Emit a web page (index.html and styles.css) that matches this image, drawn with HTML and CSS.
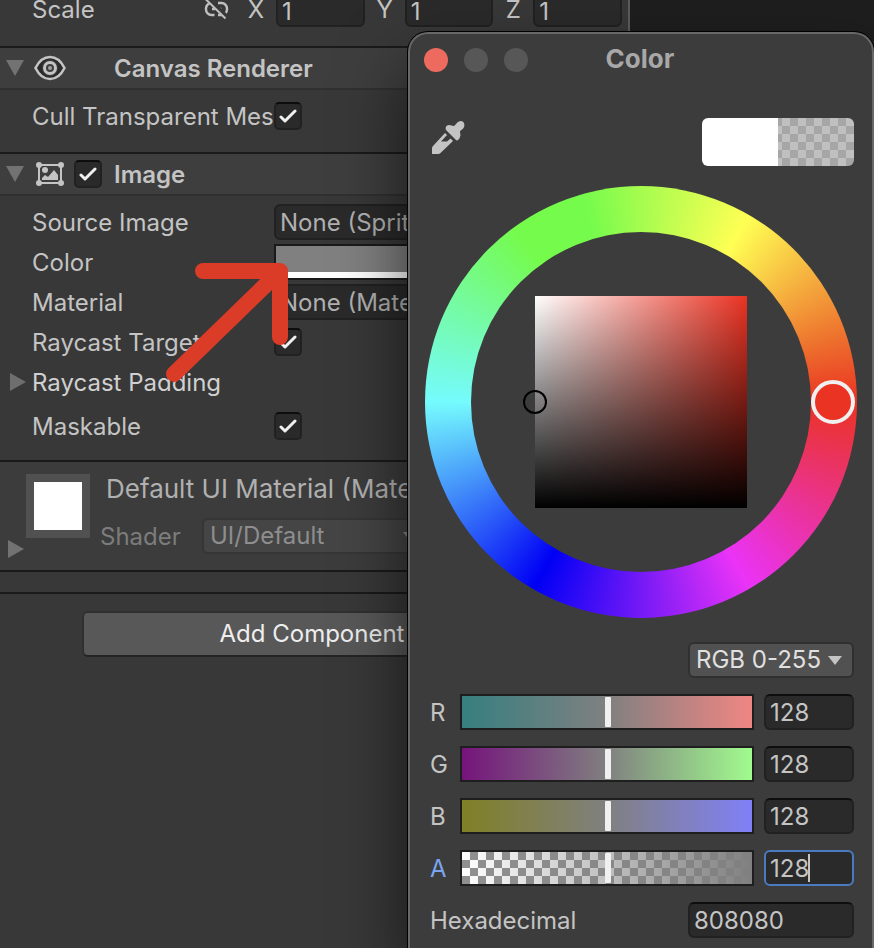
FILE: index.html
```html
<!DOCTYPE html>
<html lang="en">
<head>
<meta charset="utf-8">
<title>Inspector</title>
<link rel="stylesheet" href="styles.css">
</head>
<body>
<main class="editor">
  <section class="inspector" aria-label="Inspector">
    <div class="scale-row">
      <span class="scale-label">Scale</span>
      <svg class="link-icon" width="26" height="22" viewBox="0 0 26 22" fill="none" stroke="#c0c0c0" stroke-width="2.400">
        <path d="M10.500 5H7.500a5.500 5.500 0 0 0-5.500 5.500v1A5.500 5.500 0 0 0 7.500 17h3M14 5h3.500a5.500 5.500 0 0 1 5.500 5.500v1a5.500 5.500 0 0 1-5.500 5.500H14"/>
        <path d="M8 11h3M14 11h3.500"/>
        <path d="M3 0L23 19.500" stroke="#383838" stroke-width="5"/>
        <path d="M1.500 1L21.500 20.500" stroke-width="2"/>
      </svg>
      <label for="sx">X</label><input class="field" id="sx" value="1">
      <label for="sy">Y</label><input class="field" id="sy" value="1">
      <label for="sz">Z</label><input class="field" id="sz" value="1">
    </div>

    <header class="component-head">
      <svg class="fold" width="18" height="16" viewBox="0 0 18 16"><path d="M0 0h18L9 16z" fill="#727272"/></svg>
      <svg class="head-icon" width="32" height="26" viewBox="0 0 32 26" fill="none" stroke="#c4c4c4" stroke-width="3">
        <path d="M1.500 13C5 6 10 2 16 2s11 4 14.500 11C27 20 22 24 16 24S5 20 1.500 13z" fill="#2b2b2b" stroke-width="2.600"/>
        <circle cx="16" cy="13" r="8" fill="#3e3e3e" stroke="none"/>
        <circle cx="16" cy="13" r="5.500"/>
        <circle cx="16" cy="13" r="2" fill="#a0a0a0" stroke="none"/>
      </svg>
      <h2>Canvas Renderer</h2>
    </header>
    <div class="component-body single">
      <div class="prop">
        <label for="cull">Cull Transparent Mesh</label>
        <span class="check"><input type="checkbox" id="cull" checked><svg width="18" height="14" viewBox="0 0 18 14"><path d="M2 8l4 4L16 2"/></svg></span>
      </div>
    </div>

    <header class="component-head">
      <svg class="fold" width="18" height="16" viewBox="0 0 18 16"><path d="M0 0h18L9 16z" fill="#727272"/></svg>
      <svg class="head-icon" width="32" height="26" viewBox="0 0 32 26" fill="#c4c4c4">
        <path d="M5 4h22v18H5z" fill="none" stroke="#c4c4c4" stroke-width="2"/>
        <circle cx="5" cy="4" r="3"/><circle cx="27" cy="4" r="3"/><circle cx="5" cy="22" r="3"/><circle cx="27" cy="22" r="3"/>
        <circle cx="11" cy="9" r="3"/>
        <path d="M8 19v-2l3-3 3 2 6-7 4 5v5z"/>
      </svg>
      <span class="check"><input type="checkbox" aria-label="Image enabled" checked><svg width="18" height="14" viewBox="0 0 18 14"><path d="M2 8l4 4L16 2"/></svg></span>
      <h2>Image</h2>
    </header>
    <div class="component-body">
      <div class="prop"><label for="src">Source Image</label><input class="field object" id="src" value="None (Sprite)"></div>
      <div class="prop"><label for="tint">Color</label><button class="tint" id="tint" aria-label="Color"></button></div>
      <div class="prop"><label for="mat">Material</label><input class="field object" id="mat" value="None (Material)"></div>
      <div class="prop">
        <label for="ray">Raycast Target</label>
        <span class="check"><input type="checkbox" id="ray" checked><svg width="18" height="14" viewBox="0 0 18 14"><path d="M2 8l4 4L16 2"/></svg></span>
      </div>
      <div class="prop foldout">
        <svg width="16" height="18" viewBox="0 0 16 18"><path d="M0 0v18l16-9z" fill="#6e6e6e"/></svg>
        <span>Raycast Padding</span>
      </div>
      <div class="prop last">
        <label for="mask">Maskable</label>
        <span class="check"><input type="checkbox" id="mask" checked><svg width="18" height="14" viewBox="0 0 18 14"><path d="M2 8l4 4L16 2"/></svg></span>
      </div>
    </div>

    <section class="material">
      <svg class="material-fold" width="16" height="18" viewBox="0 0 16 18"><path d="M0 0v18l16-9z" fill="#727272"/></svg>
      <div class="thumb"></div>
      <div class="material-info">
        <div class="material-name">Default UI Material (Material)</div>
        <div class="shader">
          <label for="shader">Shader</label>
          <div class="select-box">
            <select id="shader" disabled><option>UI/Default</option></select>
            <svg width="14" height="9" viewBox="0 0 14 9"><path d="M0 0h14L7 9z" fill="#858585"/></svg>
          </div>
        </div>
      </div>
    </section>
    <div class="divider"></div>
    <div class="add-row"><button class="add">Add Component</button></div>
  </section>
</main>

<svg class="arrow" width="104" height="130" viewBox="0 0 104 130" fill="none" stroke="#da3c28" stroke-width="16" stroke-linecap="round" stroke-linejoin="round">
  <path d="M37 15H114V81M8 118L114 15"/>
</svg>

<section class="picker" aria-label="Color picker">
  <header class="titlebar">
    <div class="lights">
      <button class="light close" aria-label="Close"></button>
      <button class="light" aria-label="Minimize" disabled></button>
      <button class="light" aria-label="Zoom" disabled></button>
    </div>
    <h1>Color</h1>
  </header>
  <div class="toolbar">
    <button class="dropper" aria-label="Pick color">
      <svg width="34" height="34" viewBox="0 0 34 34" fill="#c4c4c4">
        <path d="M15 9c-1-2 0-5 3-5 2 0 3 1 5 1 2-1 3-5 7-5 3 0 4 4 3 6-1 3-4 3-4 5 0 1 1 3 0 5-1 3-3 4-4 3z"/>
        <path fill-rule="evenodd" d="M14 12l8 8L9.500 32c-1 1-2 1-4 1H1v-5c0-1 0-2 1-3zM16 14l-6 6.500h6l3.500-3z"/>
      </svg>
    </button>
    <div class="swatches"><span class="old"></span><span class="new"></span></div>
  </div>
  <div class="wheel">
    <div class="hole"><div class="sv"><span class="sv-cursor"></span></div></div>
    <span class="hue-cursor"></span>
  </div>
  <div class="mode">
    <div class="select-box mode-box">
      <select aria-label="Mode"><option>RGB 0-255</option></select>
      <svg width="14" height="9" viewBox="0 0 14 9"><path d="M0 0h14L7 9z" fill="#c4c4c4"/></svg>
    </div>
  </div>
  <div class="channels">
    <div class="channel"><label for="r">R</label><input class="slider red" type="range" min="0" max="255" value="128" aria-label="Red"><input class="field" id="r" value="128"></div>
    <div class="channel"><label for="g">G</label><input class="slider green" type="range" min="0" max="255" value="128" aria-label="Green"><input class="field" id="g" value="128"></div>
    <div class="channel"><label for="b">B</label><input class="slider blue" type="range" min="0" max="255" value="128" aria-label="Blue"><input class="field" id="b" value="128"></div>
    <div class="channel active"><label for="a">A</label><input class="slider alpha" type="range" min="0" max="255" value="128" aria-label="Alpha"><div class="caret-box"><input class="field" id="a" value="128"></div></div>
    <div class="hex"><label for="hex">Hexadecimal</label><input class="field" id="hex" value="808080"></div>
  </div>
</section>
</body>
</html>
```
FILE: styles.css
```css
* { box-sizing: border-box; }

body {
  margin: 0;
  min-height: 100vh;
  position: relative;
  overflow: hidden;
  background: #1e1e1e;
  color: #c4c4c4;
  font: 24px/32px Inter, "Liberation Sans", sans-serif;
}

input, button, select {
  margin: 0;
  font: inherit;
  color: inherit;
}

h1, h2 { margin: 0; font-size: 24px; font-weight: 600; }
label, h2, .scale-label, .foldout span { padding-top: 2px; }
svg { display: block; flex: none; }

.editor { display: flex; min-height: 100vh; padding-right: 244px; overflow: hidden; }

.inspector {
  flex: 1;
  min-width: 0;
  background: #383838;
  border-right: 2px solid #5c5c5c;
}

/* shared controls */
.field {
  min-width: 0;
  height: 36px;
  padding: 1px 4px 0;
  background: #2a2a2a;
  border: 2px solid #212121;
  border-top-color: #0d0d0d;
  border-radius: 6px;
  outline: none;
}

.check { display: grid; flex: none; width: 28px; height: 28px; place-items: center; }
.check > * { grid-area: 1 / 1; }
.check input {
  appearance: none;
  width: 28px;
  height: 28px;
  background: #2a2a2a;
  border: 2px solid #212121;
  border-top-color: #0d0d0d;
  border-radius: 5px;
}
.check svg {
  pointer-events: none;
  fill: none;
  stroke: #f0f0f0;
  stroke-width: 3;
  stroke-linecap: round;
  stroke-linejoin: round;
}

.select-box { display: grid; align-items: center; }
.select-box > * { grid-area: 1 / 1; }
.select-box svg { justify-self: end; margin-right: 12px; pointer-events: none; }
.select-box select {
  appearance: none;
  width: 100%;
  height: 36px;
  padding: 0 6px;
  background: #515151;
  border: 2px solid #303030;
  border-radius: 6px;
  opacity: 1;
}

/* inspector */
.scale-row {
  display: flex;
  align-items: center;
  gap: 10px;
  height: 36px;
  margin: -9px 6px 19px 32px;
}
.scale-label { width: 162px; }
.scale-row label { width: 20px; text-align: center; }
.scale-row .field { flex: 1; border-color: #212121; padding-top: 4px; }
.link-icon { margin-right: 6px; }

.component-head {
  display: flex;
  align-items: center;
  height: 44px;
  padding-left: 6px;
  background: #3e3e3e;
  border-top: 2px solid #1a1a1a;
  border-bottom: 2px solid #303030;
}
.fold { margin-right: 10px; }
.head-icon { margin-right: 8px; }
.component-head .check { margin-right: 12px; }
.component-head .head-icon + h2 { margin-left: 40px; }

.component-body { padding: 6px 6px 10px 32px; }
.single { padding-bottom: 16px; }
.prop { display: flex; align-items: center; height: 40px; }
.prop label { width: 242px; padding-right: 2px; overflow: hidden; white-space: nowrap; }
.foldout { gap: 6px; margin-left: -22px; color: #d0d0d0; }
.last { height: 48px; }
.object { flex: 1; color: #b0b0b0; border-color: #212121; }
.tint {
  flex: 1;
  height: 36px;
  padding: 0;
  border: 2px solid #1a1a1a;
  background: linear-gradient(#808080 26px, #fff 26px);
}

.material {
  display: flex;
  height: 110px;
  padding: 12px 6px 0;
  background: #3c3c3c;
  border-top: 2px solid #1a1a1a;
}
.material-fold { margin: 66px 4px 0 2px; }
.thumb {
  flex: none;
  width: 64px;
  height: 64px;
  margin-left: -2px;
  border: 8px solid #515151;
  background: #fff;
}
.material-info { flex: 1; padding-left: 10px; }
.material-name {
  height: 44px;
  padding-left: 6px;
  color: #b0b0b0;
  font-size: 26px;
  line-height: 30px;
  white-space: nowrap;
}
.shader { display: flex; align-items: center; color: #7c7c7c; }
.shader label { width: 102px; }
.shader .select-box { flex: 1; margin-right: 193px; }
.shader select { background: #454545; border-color: #363636; color: #8e8e8e; }

.divider { height: 24px; border: solid #1a1a1a; border-width: 2px 0; }
.add-row { display: flex; justify-content: center; padding: 17px 4px 0 0; }
.add {
  width: 460px;
  height: 46px;
  padding: 0;
  background: #585858;
  border: 2px solid #303030;
  border-bottom-color: #242424;
  border-radius: 6px;
  color: #eee;
}

.arrow { position: absolute; left: 166px; top: 256px; overflow: visible; }

/* floating color picker */
.picker {
  position: absolute;
  top: 32px;
  right: 0;
  width: 466px;
  padding: 0 18px 10px 20px;
  background: #3c3c3c;
  border: 2px solid #686868;
  border-radius: 20px 20px 0 0;
  border-bottom: 0;
  box-shadow: 0 0 0 1px #000, 0 36px 70px rgba(0, 0, 0, 0.6);
}

.titlebar { display: grid; grid-template-columns: 1fr auto 1fr; align-items: center; height: 52px; margin: 0 -2px 0 -6px; }
.titlebar h1 { padding-bottom: 2px; color: #a8a8a8; font-size: 26px; font-weight: 700; }
.lights { display: flex; gap: 16px; }
.light { width: 24px; height: 24px; padding: 0; border: 0; border-radius: 50%; background: #575757; }
.close { background: #ed6a5e; }

.toolbar { display: flex; justify-content: space-between; margin: 32px 0 20px; height: 48px; }
.dropper { height: 34px; margin: 3px 0 0 1px; padding: 0; border: 0; background: none; }
.swatches { display: flex; width: 152px; border-radius: 6px; overflow: hidden; }
.swatches span { flex: 1; }
.old { background: #fff; }
.new { background: repeating-conic-gradient(#a6a6a6 0 25%, #c0c0c0 0 50%) 4px 0 / 16px 16px; }

.wheel {
  display: grid;
  place-items: center;
  position: relative;
  width: 432px;
  height: 432px;
  margin-left: -5px;
  border-radius: 50%;
  background: conic-gradient(from 90deg, #ea3323, #ea33f7 60deg, #0000f5 120deg, #75fbfd 180deg, #75fb4c 234deg, #75fb4c 254deg, #ffff54 300deg, #ed702d 342deg, #ea3323);
}
.hole { display: grid; place-items: center; width: 340px; height: 340px; border-radius: 50%; background: #3c3c3c; }
.sv {
  position: relative;
  width: 212px;
  height: 212px;
  background: linear-gradient(transparent, #000), linear-gradient(to right, #fff, #ea3323);
}
.sv-cursor {
  position: absolute;
  left: -12px;
  top: 94px;
  width: 24px;
  height: 24px;
  border: 2px solid #000;
  border-radius: 50%;
}
.hue-cursor {
  position: absolute;
  right: 2px;
  top: 194px;
  width: 44px;
  height: 44px;
  border: 4px solid #f0f0f0;
  border-radius: 50%;
  background: #ea3323;
}

.mode { display: flex; justify-content: flex-end; margin-top: 24px; }
.mode-box { width: 166px; color: #e0e0e0; }

.channels { display: grid; gap: 16px; margin-top: 16px; }
.channel { display: grid; grid-template-columns: 30px 1fr 90px; align-items: center; }
.slider {
  appearance: none;
  width: auto;
  height: 36px;
  margin-right: 10px;
  border: 2px solid #1e1e1e;
  outline: none;
}
.slider::-webkit-slider-thumb {
  appearance: none;
  width: 6px;
  height: 30px;
  border-radius: 1px;
  background: #f0f0f0;
}
.red { background: linear-gradient(to right, #367f7f, #808080, #f08683); }
.green { background: linear-gradient(to right, #75147c, #808080, #a1fb8e); }
.blue { background: linear-gradient(to right, #808026, #808080, #8080f7); }
.alpha {
  background:
    linear-gradient(to right, rgba(128, 128, 128, 0), #808080),
    repeating-conic-gradient(#909090 0 25%, #fff 0 50%) 0 0 / 16px 16px;
}
.active label { color: #7ba5f0; }
.caret-box { display: grid; position: relative; }
.caret-box .field { border-color: #4a7abf; }
.caret-box::after {
  content: "";
  position: absolute;
  left: 44px;
  top: 4px;
  width: 2px;
  height: 28px;
  background: #c4c4c4;
}
.hex { display: flex; align-items: center; justify-content: space-between; height: 36px; }
.hex .field { width: 166px; }
```
